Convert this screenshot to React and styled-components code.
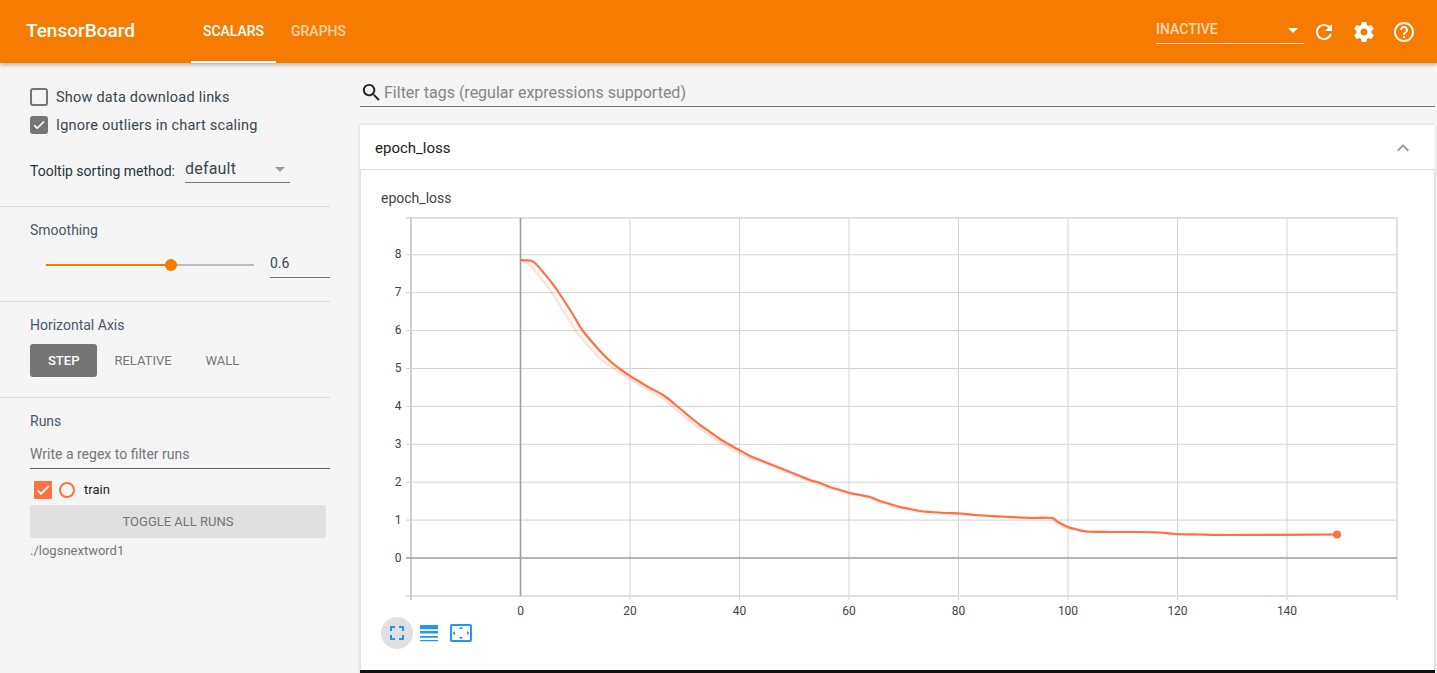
import React from "react";
import styled, { createGlobalStyle } from "styled-components";

const GlobalStyle = createGlobalStyle`
  html, body {
    margin: 0;
    height: 100%;
    overflow: hidden;
    background: #f5f5f5;
    font-family: Roboto, "Liberation Sans", sans-serif;
    color: #212121;
  }
  * { box-sizing: border-box; }
`;

const ICONS = {
  refresh: "M17.65 6.35C16.2 4.9 14.21 4 12 4c-4.42 0-7.99 3.58-7.99 8s3.57 8 7.99 8c3.73 0 6.84-2.55 7.73-6h-2.08c-.82 2.33-3.04 4-5.65 4-3.31 0-6-2.69-6-6s2.69-6 6-6c1.66 0 3.14.69 4.22 1.78L13 11h7V4l-2.35 2.35z",
  settings: "M19.43 12.98c.04-.32.07-.64.07-.98s-.03-.66-.07-.98l2.11-1.65c.19-.15.24-.42.12-.64l-2-3.46c-.12-.22-.39-.3-.61-.22l-2.49 1c-.52-.4-1.08-.73-1.69-.98l-.38-2.65C14.46 2.18 14.25 2 14 2h-4c-.25 0-.46.18-.49.42l-.38 2.65c-.61.25-1.17.59-1.69.98l-2.49-1c-.23-.09-.49 0-.61.22l-2 3.46c-.13.22-.07.49.12.64l2.11 1.65c-.04.32-.07.65-.07.98s.03.66.07.98l-2.11 1.65c-.19.15-.24.42-.12.64l2 3.46c.12.22.39.3.61.22l2.49-1c.52.4 1.08.73 1.69.98l.38 2.65c.03.24.24.42.49.42h4c.25 0 .46-.18.49-.42l.38-2.65c.61-.25 1.17-.59 1.69-.98l2.49 1c.23.09.49 0 .61-.22l2-3.46c.12-.22.07-.49-.12-.64l-2.11-1.65zM12 15.5c-1.93 0-3.5-1.57-3.5-3.5s1.57-3.5 3.5-3.5 3.5 1.57 3.5 3.5-1.57 3.5-3.5 3.5z",
  help: "M11 18h2v-2h-2v2zm1-16C6.48 2 2 6.48 2 12s4.48 10 10 10 10-4.48 10-10S17.52 2 12 2zm0 18c-4.41 0-8-3.59-8-8s3.59-8 8-8 8 3.59 8 8-3.59 8-8 8zm0-14c-2.21 0-4 1.79-4 4h2c0-1.1.9-2 2-2s2 .9 2 2c0 2-3 1.75-3 5h2c0-2.25 3-2.5 3-5 0-2.21-1.79-4-4-4z",
  search: "M15.5 14h-.79l-.28-.27C15.41 12.59 16 11.11 16 9.5 16 5.91 13.09 3 9.5 3S3 5.91 3 9.5 5.91 16 9.5 16c1.61 0 3.09-.59 4.23-1.57l.27.28v.79l5 4.99L20.49 19l-4.99-5zm-6 0C7.01 14 5 11.99 5 9.5S7.01 5 9.5 5 14 7.01 14 9.5 11.99 14 9.5 14z",
  expandLess: "M12 8l-6 6 1.41 1.41L12 10.83l4.59 4.58L18 14z",
  check: "M9 16.17L4.83 12l-1.42 1.41L9 19 21 7l-1.41-1.41z",
  fullscreen: "M7 14H5v5h5v-2H7v-3zm-2-4h2V7h3V5H5v5zm12 7h-3v2h5v-5h-2v3zM14 5v2h3v3h2V5h-5z",
  lines: "M3 4h18v4.3H3zM3 10h18v2.6H3zM3 15h18v1.8H3zM3 19h18v1.2H3z",
  overscan: "M12.01 5.5L10 8h4l-1.99-2.5zM18 10v4l2.5-1.99L18 10zM6 10l-2.5 2.01L6 14v-4zm8 6h-4l2.01 2.5L14 16zm7-13H3c-1.1 0-2 .9-2 2v14c0 1.1.9 2 2 2h18c1.1 0 2-.9 2-2V5c0-1.1-.9-2-2-2zm0 16.01H3V4.99h18v14.02z",
};

const Icon = ({ name, size = 24, color = "currentColor", bold = 0 }) => (
  <svg width={size} height={size} viewBox="0 0 24 24" fill={color} stroke={bold ? color : "none"} strokeWidth={bold} style={{ display: "block" }}>
    <path d={ICONS[name]} />
  </svg>
);

// smoothed curve, traced in page pixels
const SMOOTH = [
  [520.5, 259], [526, 259.3], [532, 260], [537, 264], [543, 271], [552, 282], [559, 292], [572, 312], [583, 330],
  [600, 350], [610, 360], [620, 368], [630, 375], [640, 381], [650, 387], [663, 394], [677, 405], [690, 416],
  [700, 424], [710, 431], [720, 438], [730, 444], [740, 449.5], [750, 455], [760, 459], [770, 463],
  [780, 467], [790, 471], [800, 475], [810, 479], [820, 482], [830, 486], [840, 489], [850, 492], [860, 494],
  [870, 496], [880, 500], [890, 503], [900, 506], [910, 508], [920, 510], [930, 511], [945, 512], [960, 512.5],
  [975, 514], [1000, 515.5], [1020, 516.5], [1035, 517], [1052, 517], [1058, 521], [1068, 526], [1075, 528],
  [1087, 530.5], [1110, 531], [1140, 531], [1160, 531.5], [1175, 533], [1200, 533.5], [1230, 534], [1337, 533.5],
];

const rawShift = (x) => (x < 620 ? 7 : x < 760 ? 5 : 3);
const rawPoints = SMOOTH.map(([x, y], i) =>
  i === 0 || i === SMOOTH.length - 1 ? [x, y] : [Math.max(520.5, x - rawShift(x)), y]
);

// catmull-rom through the traced points, so the line has no corners
const toPath = (pts) => {
  let d = `M${pts[0][0]} ${pts[0][1]}`;
  for (let i = 0; i < pts.length - 1; i++) {
    const p0 = pts[i - 1] || pts[i];
    const p1 = pts[i];
    const p2 = pts[i + 1];
    const p3 = pts[i + 2] || p2;
    const c1x = p1[0] + (p2[0] - p0[0]) / 6;
    const c1y = p1[1] + (p2[1] - p0[1]) / 6;
    const c2x = p2[0] - (p3[0] - p1[0]) / 6;
    const c2y = p2[1] - (p3[1] - p1[1]) / 6;
    d += `C${c1x} ${c1y} ${c2x} ${c2y} ${p2[0]} ${p2[1]}`;
  }
  return d;
};

const X_TICKS = [0, 20, 40, 60, 80, 100, 120, 140];
const Y_TICKS = [0, 1, 2, 3, 4, 5, 6, 7, 8];
const xAt = (step) => 520.5 + step * 5.475;
const yAt = (v) => 557 - v * 37.9;

const LossChart = () => (
  <ChartSvg viewBox="361 210 1060 406" width="1060" height="406">
    <g stroke="#d2d2d2" strokeWidth="1">
      {X_TICKS.slice(1).map((t) => (
        <line key={t} x1={xAt(t)} x2={xAt(t)} y1="217" y2="599" />
      ))}
      {Y_TICKS.slice(1).map((t) => (
        <line key={t} x1="406" x2="1397" y1={yAt(t)} y2={yAt(t)} />
      ))}
    </g>
    <g stroke="#e0e0e0" strokeWidth="2">
      <line x1="406" x2="1398" y1="217" y2="217" />
      <line x1="406" x2="1398" y1="595" y2="595" />
      <line x1="1397" x2="1397" y1="216" y2="599" />
    </g>
    <line x1="411" x2="411" y1="216" y2="599" stroke="#cfcfcf" strokeWidth="2" />
    <line x1="406" x2="1397" y1="557" y2="557" stroke="#9e9e9e" strokeWidth="1.6" />
    <line x1="520.5" x2="520.5" y1="217" y2="595" stroke="#9e9e9e" strokeWidth="1.6" />
    <path d={toPath(rawPoints)} fill="none" stroke="#ff7043" strokeOpacity="0.2" strokeWidth="2.5" />
    <path d={toPath(SMOOTH)} fill="none" stroke="#ff7043" strokeWidth="2.2" />
    <circle cx="1337" cy="533.5" r="4" fill="#ff7043" />
    {Y_TICKS.map((t) => (
      <AxisText key={t} x="398" y={yAt(t) + 3.5} textAnchor="middle">{t}</AxisText>
    ))}
    {X_TICKS.map((t) => (
      <AxisText key={t} x={xAt(t)} y="614" textAnchor="middle">{t}</AxisText>
    ))}
  </ChartSvg>
);

const App = () => (
  <>
    <GlobalStyle />
    <Page>
      <Header>
        <Brand>TensorBoard</Brand>
        <Tab $active>Scalars</Tab>
        <Tab>Graphs</Tab>
        <HeaderRight>
          <RunSelect>
            <span>INACTIVE</span>
            <Caret $color="#fff" />
          </RunSelect>
          <HeaderIcon><Icon name="refresh" /></HeaderIcon>
          <HeaderIcon><Icon name="settings" /></HeaderIcon>
          <HeaderIcon><Icon name="help" /></HeaderIcon>
        </HeaderRight>
      </Header>
      <Body>
        <Sidebar>
          <OptionsSection>
            <CheckRow>
              <CheckBox />
              <CheckLabel>Show data download links</CheckLabel>
            </CheckRow>
            <CheckRow>
              <CheckBox $checked><Icon name="check" size={16} color="#fff" bold={1.2} /></CheckBox>
              <CheckLabel>Ignore outliers in chart scaling</CheckLabel>
            </CheckRow>
            <SortRow>
              <SortLabel>Tooltip sorting method:</SortLabel>
              <SortSelect>
                <span>default</span>
                <Caret $color="#9e9e9e" />
              </SortSelect>
            </SortRow>
          </OptionsSection>
          <SmoothingSection>
            <SectionTitle>Smoothing</SectionTitle>
            <SliderRow>
              <Slider>
                <SliderFill $value={0.6} />
                <SliderKnob $value={0.6} />
              </Slider>
              <SliderValue>0.6</SliderValue>
            </SliderRow>
          </SmoothingSection>
          <AxisSection>
            <SectionTitle>Horizontal Axis</SectionTitle>
            <AxisButtons>
              <AxisButton $active>Step</AxisButton>
              <AxisButton>Relative</AxisButton>
              <AxisButton>Wall</AxisButton>
            </AxisButtons>
          </AxisSection>
          <RunsSection>
            <SectionTitle>Runs</SectionTitle>
            <RunFilter>Write a regex to filter runs</RunFilter>
            <RunRow>
              <RunCheck><Icon name="check" size={16} color="#fff" bold={1.2} /></RunCheck>
              <RunDot />
              <RunName>train</RunName>
            </RunRow>
            <ToggleRuns>Toggle all runs</ToggleRuns>
            <LogDir>./logsnextword1</LogDir>
          </RunsSection>
        </Sidebar>
        <Main>
          <TagFilter>
            <Icon name="search" size={23} color="#212121" />
            <span>Filter tags (regular expressions supported)</span>
          </TagFilter>
          <Card>
            <CardHeader>
              <CardTitle>epoch_loss</CardTitle>
              <Icon name="expandLess" size={24} color="#9e9e9e" />
            </CardHeader>
            <ChartPane>
              <ChartTitle>epoch_loss</ChartTitle>
              <LossChart />
              <ChartTools>
                <ToolButton $active><Icon name="fullscreen" size={24} /></ToolButton>
                <ToolButton><Icon name="lines" size={24} /></ToolButton>
                <ToolButton><Icon name="overscan" size={24} /></ToolButton>
              </ChartTools>
            </ChartPane>
            <NextCardEdge />
          </Card>
        </Main>
      </Body>
    </Page>
  </>
);

const Page = styled.div`
  height: 673px;
  display: flex;
  flex-direction: column;
  overflow: hidden;
`;

const Header = styled.header`
  height: 63px;
  flex: none;
  display: flex;
  align-items: stretch;
  padding-left: 26px;
  background: #f57c00;
  color: #fff;
  box-shadow: 0 2px 4px rgba(0, 0, 0, 0.28);
  position: relative;
  z-index: 2;
`;

const Brand = styled.div`
  width: 165px;
  font-size: 19px;
  font-weight: 500;
  line-height: 62px;
`;

const Tab = styled.div`
  min-width: 85px;
  text-align: center;
  font-size: 14px;
  font-weight: 500;
  line-height: 62px;
  text-transform: uppercase;
  color: ${(p) => (p.$active ? "#fff" : "rgba(255, 255, 255, 0.68)")};
  border-bottom: 2px solid ${(p) => (p.$active ? "#fff" : "transparent")};
`;

const HeaderRight = styled.div`
  margin-left: auto;
  display: flex;
  align-items: center;
  padding-right: 13px;
`;

const RunSelect = styled.div`
  width: 148px;
  height: 28px;
  padding: 0 6px 0 0;
  display: flex;
  align-items: center;
  justify-content: space-between;
  font-size: 14px;
  font-weight: 500;
  color: rgba(255, 255, 255, 0.72);
  border-bottom: 1px solid rgba(255, 255, 255, 0.8);
  transform: translateY(-2px);

  i {
    margin-top: 3px;
  }
`;

const Caret = styled.i`
  width: 0;
  height: 0;
  border-left: 5px solid transparent;
  border-right: 5px solid transparent;
  border-top: 5px solid ${(p) => p.$color};
`;

const HeaderIcon = styled.div`
  width: 40px;
  display: flex;
  justify-content: center;
`;

const Body = styled.div`
  flex: 1;
  display: flex;
  min-height: 0;
`;

const Sidebar = styled.aside`
  width: 330px;
  flex: none;
`;

const Section = styled.section`
  border-bottom: 1px solid #dcdcdc;
  padding-left: 30px;
`;

const OptionsSection = styled(Section)`
  height: 144px;
  padding-top: 25px;
`;

const CheckRow = styled.div`
  height: 18px;
  margin-bottom: 10px;
  display: flex;
  align-items: center;
`;

const CheckBox = styled.div`
  width: 18px;
  height: 18px;
  flex: none;
  display: flex;
  align-items: center;
  justify-content: center;
  border-radius: 3px;
  border: 2px solid #757575;
  background: ${(p) => (p.$checked ? "#757575" : "transparent")};
`;

const CheckLabel = styled.span`
  margin-left: 8px;
  font-size: 14.5px;
  letter-spacing: 0.22px;
  color: #37474f;
`;

const SortRow = styled.div`
  margin-top: 22px;
  display: flex;
  align-items: flex-end;
`;

const SortLabel = styled.span`
  width: 155px;
  font-size: 14px;
  line-height: 23px;
  color: #263238;
`;

const SortSelect = styled.div`
  width: 105px;
  height: 27px;
  padding: 0 5px 1px 0;
  display: flex;
  align-items: center;
  justify-content: space-between;
  font-size: 16px;
  letter-spacing: 0.2px;
  color: #37474f;
  border-bottom: 1px solid #757575;

  i {
    margin-top: 2px;
  }
`;

const SmoothingSection = styled(Section)`
  height: 95px;
  padding-top: 15px;
`;

const SectionTitle = styled.div`
  font-size: 14px;
  line-height: 16px;
  color: #4a5568;
`;

const SliderRow = styled.div`
  margin-top: 13px;
  display: flex;
  align-items: center;
`;

const Slider = styled.div`
  width: 208px;
  height: 2px;
  margin: 0 16px;
  background: #bdbdbd;
  position: relative;
`;

const SliderFill = styled.div`
  height: 2px;
  width: ${(p) => p.$value * 100}%;
  background: #f57c00;
`;

const SliderKnob = styled.div`
  position: absolute;
  top: -5px;
  left: ${(p) => p.$value * 100}%;
  width: 12px;
  height: 12px;
  margin-left: -6px;
  border-radius: 50%;
  background: #f57c00;
`;

const SliderValue = styled.div`
  flex: 1;
  height: 27px;
  font-size: 14px;
  line-height: 24px;
  color: #37474f;
  border-bottom: 1px solid #757575;
`;

const AxisSection = styled(Section)`
  height: 96px;
  padding-top: 15px;
`;

const AxisButtons = styled.div`
  margin-top: 11px;
  display: flex;
`;

const AxisButton = styled.div`
  height: 33px;
  padding: 0 ${(p) => (p.$active ? 18 : 17)}px;
  border-radius: 3px;
  font-size: 13px;
  font-weight: ${(p) => (p.$active ? 500 : 400)};
  line-height: 33px;
  text-transform: uppercase;
  color: ${(p) => (p.$active ? "#fff" : "#757575")};
  background: ${(p) => (p.$active ? "#757575" : "transparent")};
`;

const RunsSection = styled.section`
  padding: 15px 0 0 30px;
`;

const RunFilter = styled.div`
  margin-top: 16px;
  height: 24px;
  font-size: 14px;
  line-height: 18px;
  color: #757575;
  border-bottom: 1px solid #616161;
`;

const RunRow = styled.div`
  height: 36px;
  padding: 6px 0 0 4px;
  display: flex;
  align-items: center;
`;

const RunCheck = styled.div`
  width: 18px;
  height: 18px;
  display: flex;
  align-items: center;
  justify-content: center;
  border-radius: 1px;
  background: #ff7043;
`;

const RunDot = styled.div`
  width: 16px;
  height: 16px;
  margin-left: 7px;
  border-radius: 50%;
  border: 2px solid #ff7043;
`;

const RunName = styled.span`
  margin-left: 9px;
  margin-top: -2px;
  font-size: 13px;
  color: #212121;
`;

const ToggleRuns = styled.div`
  width: 296px;
  height: 33px;
  border-radius: 3px;
  text-align: center;
  font-size: 13px;
  line-height: 33px;
  text-transform: uppercase;
  color: #757575;
  background: #e0e0e0;
`;

const LogDir = styled.div`
  margin-top: 5px;
  font-size: 13px;
  line-height: 15px;
  color: #757575;
`;

const Main = styled.main`
  flex: 1;
  min-width: 0;
  padding: 0 2px 0 30px;
  display: flex;
  flex-direction: column;
`;

const TagFilter = styled.div`
  height: 44px;
  flex: none;
  display: flex;
  align-items: center;
  gap: 1px;
  padding-top: 15px;
  font-size: 16px;
  color: #858585;
  border-bottom: 1px solid #757575;
`;

const Card = styled.div`
  margin-top: 18px;
  flex: 1;
  min-height: 0;
  display: flex;
  flex-direction: column;
  background: #fff;
  box-shadow: 0 0 3px rgba(0, 0, 0, 0.15);
`;

const CardHeader = styled.div`
  height: 44px;
  flex: none;
  display: flex;
  align-items: center;
  justify-content: space-between;
  padding: 1px 20px 0 15px;
`;

const CardTitle = styled.div`
  font-size: 15px;
  color: #212121;
`;

const ChartPane = styled.div`
  flex: 1;
  min-height: 0;
  padding: 20px 0 0;
  border: 1px solid #e0e0e0;
  border-bottom: 0;
`;

const ChartTitle = styled.div`
  padding-left: 20px;
  font-size: 14px;
  line-height: 16px;
  color: #424242;
`;

const ChartSvg = styled.svg`
  display: block;
  margin-top: 5px;
`;

const AxisText = styled.text`
  font-family: Roboto, "Liberation Sans", sans-serif;
  font-size: 12px;
  fill: #424242;
`;

const ChartTools = styled.div`
  padding-left: 20px;
  display: flex;
`;

const ToolButton = styled.div`
  width: 32px;
  height: 32px;
  display: flex;
  align-items: center;
  justify-content: center;
  border-radius: 50%;
  color: #2196f3;
  background: ${(p) => (p.$active ? "#e0e0e0" : "transparent")};
`;

const NextCardEdge = styled.div`
  height: 3px;
  flex: none;
  background: #111;
`;

export default App;
